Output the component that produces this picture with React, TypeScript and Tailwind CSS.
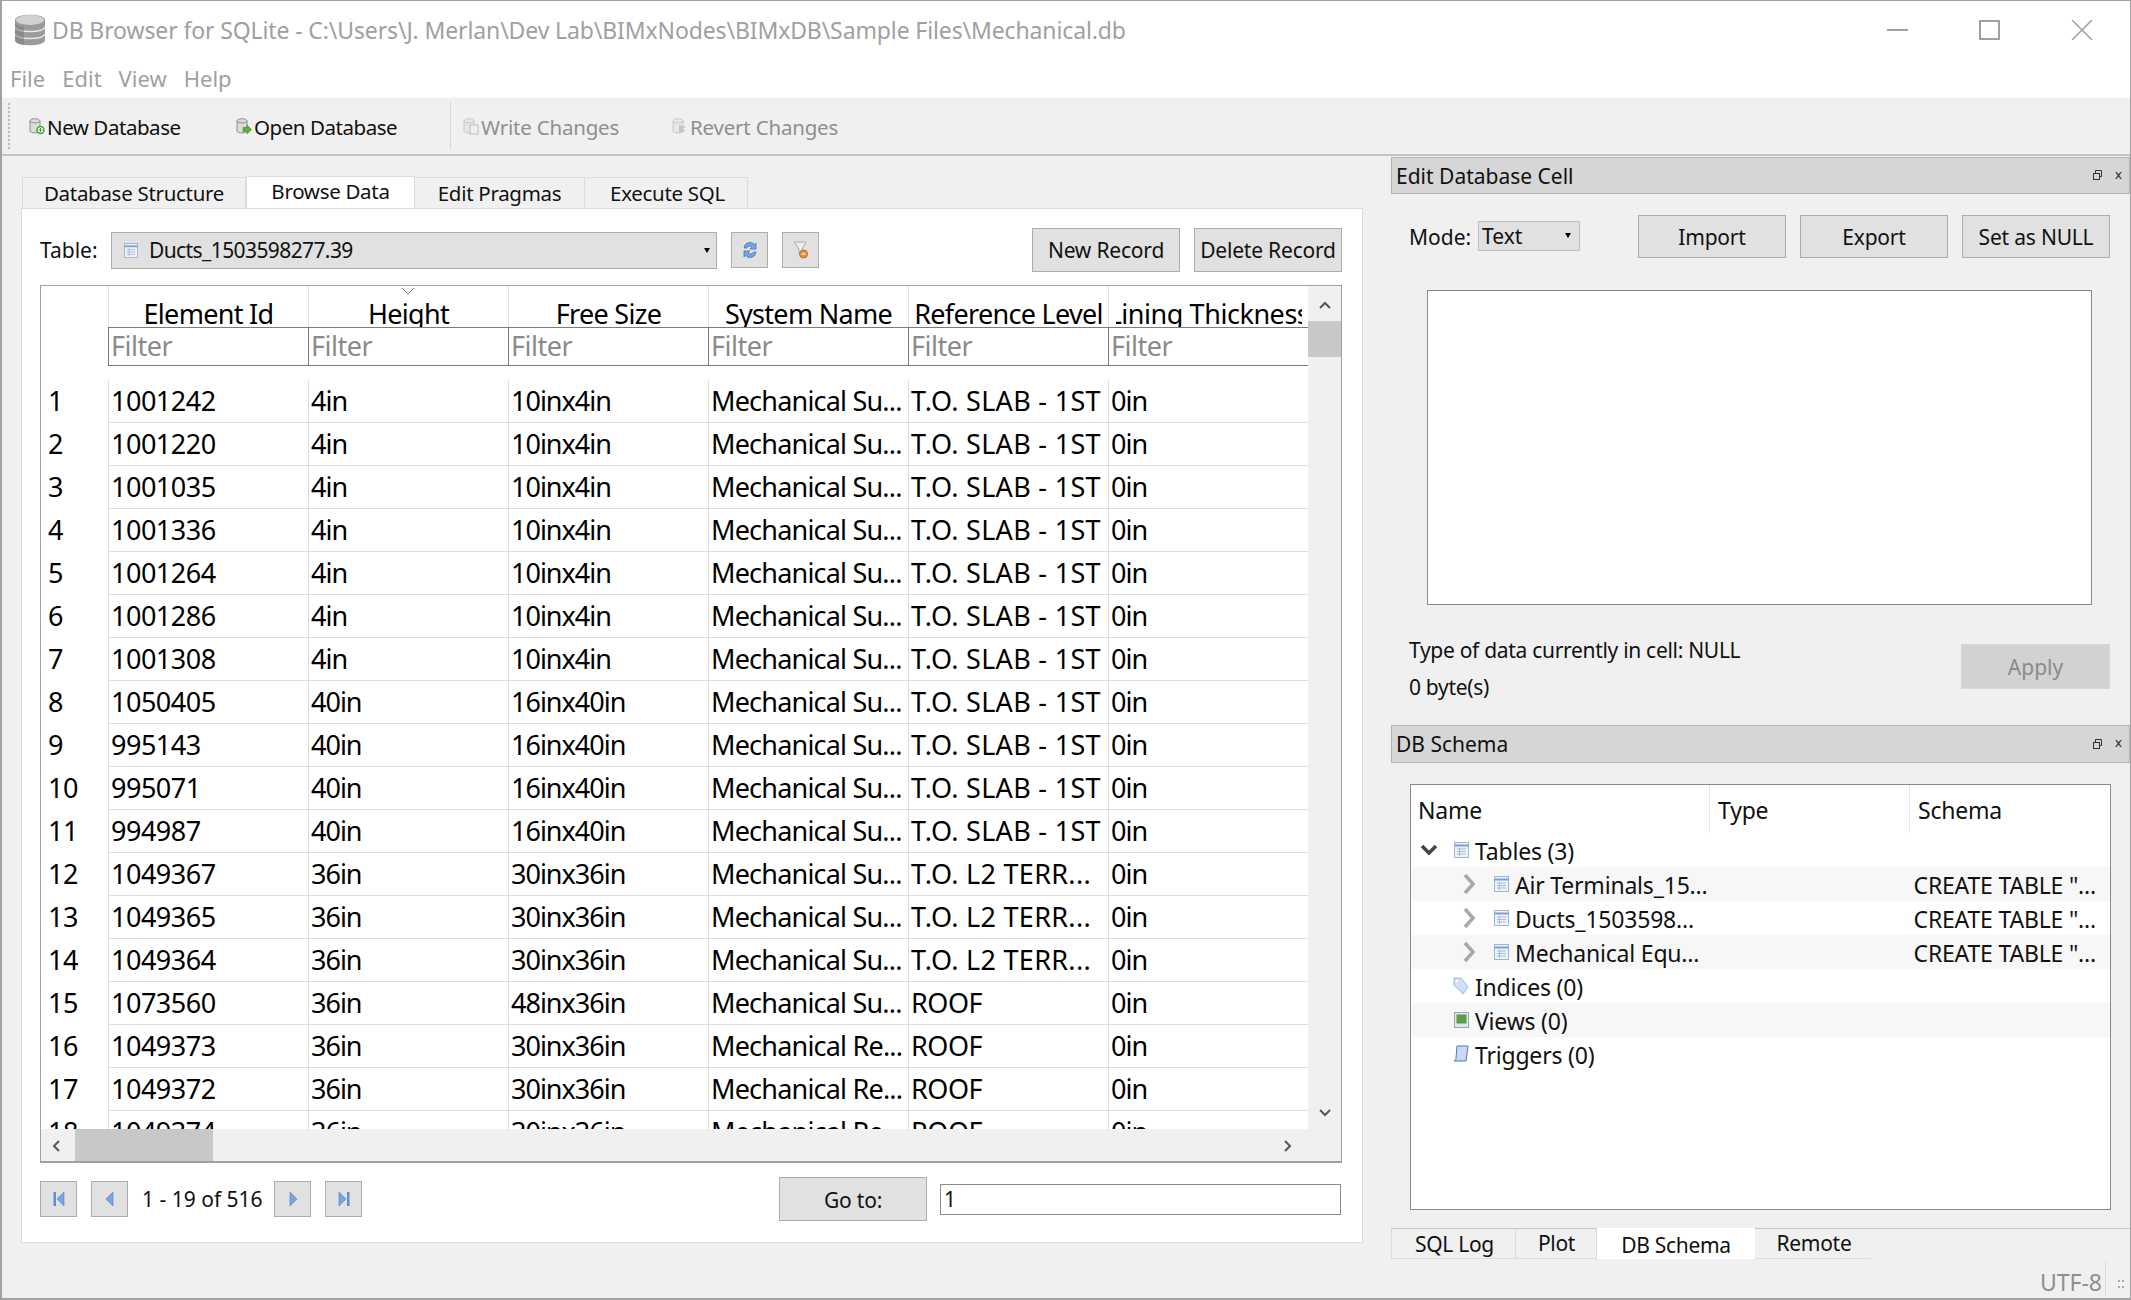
const rows = [
  ['1001242', '4in', '10inx4in', 'Mechanical Su...', 'T.O. SLAB - 1ST'],
  ['1001220', '4in', '10inx4in', 'Mechanical Su...', 'T.O. SLAB - 1ST'],
  ['1001035', '4in', '10inx4in', 'Mechanical Su...', 'T.O. SLAB - 1ST'],
  ['1001336', '4in', '10inx4in', 'Mechanical Su...', 'T.O. SLAB - 1ST'],
  ['1001264', '4in', '10inx4in', 'Mechanical Su...', 'T.O. SLAB - 1ST'],
  ['1001286', '4in', '10inx4in', 'Mechanical Su...', 'T.O. SLAB - 1ST'],
  ['1001308', '4in', '10inx4in', 'Mechanical Su...', 'T.O. SLAB - 1ST'],
  ['1050405', '40in', '16inx40in', 'Mechanical Su...', 'T.O. SLAB - 1ST'],
  ['995143', '40in', '16inx40in', 'Mechanical Su...', 'T.O. SLAB - 1ST'],
  ['995071', '40in', '16inx40in', 'Mechanical Su...', 'T.O. SLAB - 1ST'],
  ['994987', '40in', '16inx40in', 'Mechanical Su...', 'T.O. SLAB - 1ST'],
  ['1049367', '36in', '30inx36in', 'Mechanical Su...', 'T.O. L2 TERR...'],
  ['1049365', '36in', '30inx36in', 'Mechanical Su...', 'T.O. L2 TERR...'],
  ['1049364', '36in', '30inx36in', 'Mechanical Su...', 'T.O. L2 TERR...'],
  ['1073560', '36in', '48inx36in', 'Mechanical Su...', 'ROOF'],
  ['1049373', '36in', '30inx36in', 'Mechanical Re...', 'ROOF'],
  ['1049372', '36in', '30inx36in', 'Mechanical Re...', 'ROOF'],
  ['1049374', '36in', '30inx36in', 'Mechanical Re...', 'ROOF'],
]

const headers = ['Element Id', 'Height', 'Free Size', 'System Name', 'Reference Level', 'Lining Thickness']

// Noto runs wider than the screenshot's font on lowercase, narrower on capitals
const cellTracking = (c: string) => {
  if (c.startsWith('T.O.')) return 'tracking-[0.3px]'
  if (c.startsWith('Mechanical')) return 'tracking-[-0.8px]'
  if (c.includes('in')) return 'tracking-[-1px]'
  return 'tracking-[-0.5px]'
}

function DbIcon({ faded, badge }: { faded?: boolean; badge: 'plus' | 'arrow' | 'doc' | 'undo' }) {
  return (
    <svg width="16" height="17" viewBox="0 0 16 17" className={faded ? 'opacity-40' : ''}>
      <path d="M1 3c0-3 10-3 10 0v10c0 2.500-10 2.500-10 0z" fill="#dcdcdc" stroke="#8f8f8f" />
      <path d="M1 3c0 2.500 10 2.500 10 0" fill="none" stroke="#8f8f8f" />
      {badge === 'plus' && <circle cx="11.500" cy="12" r="3.500" fill="#fff" stroke="#4a9a3a" strokeWidth="1.500" />}
      {badge === 'plus' && <path d="M9.500 12h4M11.500 10v4" stroke="#4a9a3a" />}
      {badge === 'arrow' && <path d="M7 9.500h4V7l4.500 4.500L11 16v-2.500H7z" fill="#5fae3c" stroke="#3f8a2a" strokeWidth=".6" />}
      {badge === 'doc' && <rect x="7" y="7" width="8" height="9" fill="#eee" stroke="#777" />}
      {badge === 'undo' && <path d="M7 7l7 2-4 2 4 2-7 2z" fill="#888" />}
    </svg>
  )
}

function TableIcon({ size = 15 }: { size?: number }) {
  return (
    <svg width={size} height={size + 1} viewBox="0 0 15 16">
      <rect x=".5" y=".5" width="14" height="15" fill="#eef3fa" stroke="#9db6d8" />
      <path d="M.5 3.500h14" stroke="#7f9fcb" strokeWidth="2" />
      <path d="M3 7h9M3 9.500h9M3 12h9M5.500 5.500v8.500" stroke="#a6bbd6" />
    </svg>
  )
}

function NavIcon({ dir, edge }: { dir: 'left' | 'right'; edge?: boolean }) {
  return (
    <svg width="14" height="18" viewBox="0 0 14 18" className={dir === 'right' ? 'scale-x-[-1]' : ''}>
      {edge && <rect x="1.500" y="2" width="2.500" height="14" fill="#5b8fd6" />}
      <path d={edge ? 'M12 2v14L5 9z' : 'M10 2v14L3 9z'} fill="#7aa6e0" stroke="#4f80c4" strokeWidth=".6" />
    </svg>
  )
}

function Arrow() {
  return <div className="w-0 h-0 border-x-[3px] border-x-transparent border-t-[5px] border-t-black" />
}

function DockTitle({ title }: { title: string }) {
  return (
    <div className="h-[38px] bg-[#d6d6d6] border border-[#b4b4b4] flex items-center pl-[4px] text-[21px] text-[#111]">
      <span className="pt-[3px]">{title}</span>
      <svg width="9" height="10" viewBox="0 0 9 10" className="ml-auto mr-[13px]">
        <rect x=".5" y="3.500" width="6" height="6" fill="none" stroke="#333" />
        <path d="M2.500 3V.5h6v6H7" fill="none" stroke="#333" />
      </svg>
      <span className="mr-[7px] mb-[2px] text-[13px] leading-none text-[#222]">x</span>
    </div>
  )
}

function QtButton({ label, className }: { label: string; className: string }) {
  return (
    <div className={`${className} bg-[#e1e1e1] border border-[#adadad] flex items-center justify-center text-[21px] tracking-[-0.2px] text-[#111]`}>
      {label}
    </div>
  )
}

function ToolItem({ label, faded, badge, className }: { label: string; faded?: boolean; badge: 'plus' | 'arrow' | 'doc' | 'undo'; className: string }) {
  return (
    <div className={`${className} flex items-center gap-[2px] ${faded ? 'text-[#8f8f8f] tracking-[-0.2px]' : 'text-[#111]'}`}>
      <DbIcon faded={faded} badge={badge} />
      <span className="pt-[2px]">{label}</span>
    </div>
  )
}

function TreeRow({ shade, indent, chevron, icon, label, schema }: { shade?: boolean; indent: string; chevron?: 'down' | 'right'; icon: React.ReactNode; label: string; schema?: string }) {
  return (
    <div className={`h-[34px] flex items-center ${shade ? 'bg-[#f7f7f7]' : 'bg-white'}`}>
      <div className={`${indent} flex items-center shrink-0`}>
        <div className="w-[22px] flex justify-center">
          {chevron === 'down' && (
            <svg width="18" height="12" viewBox="0 0 18 12"><path d="M2 2l7 7 7-7" fill="none" stroke="#444" strokeWidth="3.500" /></svg>
          )}
          {chevron === 'right' && (
            <svg width="12" height="22" viewBox="0 0 12 22"><path d="M2 2l8 9-8 9" fill="none" stroke="#a8a8a8" strokeWidth="3.500" /></svg>
          )}
        </div>
      </div>
      <div className="w-[20px] ml-[11px] flex justify-center shrink-0">{icon}</div>
      <span className="ml-[4px] pt-[4px] whitespace-nowrap">{label}</span>
      {schema && <span className="ml-auto mr-[14px] pt-[4px] whitespace-nowrap">{schema}</span>}
    </div>
  )
}

export default function App() {
  return (
    <div className="w-[2131px] h-[1300px] bg-[#f0f0f0] border-l-2 border-t border-r border-b-2 border-[#a2a2a2] overflow-hidden flex flex-col font-['Noto_Sans',sans-serif]">
      {/* title bar */}
      <div className="h-[61px] bg-white flex items-center shrink-0">
        <svg width="32" height="32" viewBox="0 0 32 32" className="ml-[12px] mt-[-4px]">
          <path d="M1 6c0-7 30-7 30 0v20c0 7-30 7-30 0z" fill="#9b9b9b" />
          <ellipse cx="16" cy="6" rx="14" ry="5" fill="#d2d2d2" />
          <path d="M1 13c2 6 28 6 30 0M1 20c2 6 28 6 30 0" fill="none" stroke="#e8e8e8" strokeWidth="1.500" />
          <path d="M1 9v17c0 3 5 5 9 5V12C6 12 2 11 1 9z" fill="#7b7b7b" opacity=".5" />
        </svg>
        <span className="ml-[6px] mt-[-2px] text-[23px] tracking-[-0.12px] text-[#a0a0a0] whitespace-nowrap">DB Browser for SQLite - C:\Users\J. Merlan\Dev Lab\BIMxNodes\BIMxDB\Sample Files\Mechanical.db</span>
        <div className="ml-auto flex items-center mt-[-4px]">
          <div className="w-[21px] h-[2px] bg-[#a0a0a0]" />
          <div className="w-[21px] h-[20px] ml-[71px] border-2 border-[#a0a0a0]" />
          <svg width="22" height="20" viewBox="0 0 22 20" className="ml-[71px] mr-[37px]"><path d="M1 0l20 20M21 0L1 20" stroke="#a0a0a0" strokeWidth="1.500" /></svg>
        </div>
      </div>

      {/* menu */}
      <div className="h-[35px] bg-white flex items-center pl-[8px] pb-[2px] gap-[17px] text-[22px] text-[#a0a0a0] shrink-0">
        <span>File</span><span>Edit</span><span>View</span><span>Help</span>
      </div>

      {/* toolbar */}
      <div className="h-[59px] border-b-2 border-[#c4c4c4] border-t border-t-[#f8f8f8] flex items-center text-[20.500px] tracking-[-0.45px] shrink-0">
        <div className="w-0 h-[46px] ml-[6px] border-l-2 border-dotted border-[#b8b8b8]" />
        <ToolItem label="New Database" badge="plus" className="ml-[19px] w-[207px]" />
        <ToolItem label="Open Database" badge="arrow" className="w-[214px]" />
        <div className="w-px h-[48px] bg-[#d8d8d8]" />
        <ToolItem label="Write Changes" faded badge="doc" className="ml-[12px] w-[209px]" />
        <ToolItem label="Revert Changes" faded badge="undo" />
      </div>

      <div className="flex flex-1 min-h-0">
        {/* main pane */}
        <div className="w-[1389px] shrink-0 flex flex-col">
          <div className="flex mt-[19px] ml-[20px] h-[33px] items-end text-[20.500px] tracking-[-0.3px] text-[#111]">
            <div className="w-[224px] h-[31px] bg-[#f0f0f0] border border-b-0 border-[#dcdcdc] flex items-center justify-center">Database Structure</div>
            <div className="w-[169px] h-[32px] bg-white border-t border-x border-[#dcdcdc] flex items-center justify-center pb-[3px] relative">Browse Data</div>
            <div className="w-[170px] h-[31px] bg-[#f0f0f0] border-t border-r border-[#dcdcdc] flex items-center justify-center">Edit Pragmas</div>
            <div className="w-[163px] h-[31px] bg-[#f0f0f0] border-t border-r border-[#dcdcdc] flex items-center justify-center pl-[3px]">Execute SQL</div>
          </div>
          <div className="ml-[19px] w-[1342px] h-[1035px] bg-white border border-[#dcdcdc] flex flex-col pl-[18px] pr-[20px]">
            {/* table selector row */}
            <div className="flex items-center h-[44px] mt-[19px] text-[21px] text-[#111]">
              <span className="w-[71px] pt-[1px]">Table:</span>
              <div className="w-[606px] h-[37px] bg-[#e1e1e1] border border-[#adadad] flex items-center pl-[12px] pr-[6px]">
                <TableIcon size={14} />
                <span className="ml-[11px] pt-[2px] tracking-[-0.6px]">Ducts_1503598277.39</span>
                <div className="ml-auto"><Arrow /></div>
              </div>
              <div className="ml-[14px] w-[37px] h-[36px] bg-[#e1e1e1] border border-[#adadad] flex items-center justify-center">
                <svg width="16" height="20" viewBox="0 0 16 20"><path d="M2 8a6 6 0 0 1 10.500-3.500L14 3v6H8l2-2a3.500 3.500 0 0 0-5.500 1z" fill="#7ba6dd" stroke="#3f74bb" strokeWidth=".8" /><path d="M14 12a6 6 0 0 1-10.500 3.500L2 17v-6h6l-2 2a3.500 3.500 0 0 0 5.500-1z" fill="#7ba6dd" stroke="#3f74bb" strokeWidth=".8" /></svg>
              </div>
              <div className="ml-[14px] w-[37px] h-[36px] bg-[#e1e1e1] border border-[#adadad] flex items-center justify-center">
                <svg width="16" height="20" viewBox="0 0 16 20"><path d="M1 2h12L9 9v6L6 12V9z" fill="#eee" stroke="#aaa" /><circle cx="10.500" cy="14" r="4" fill="#e8913a" stroke="#b96a1e" /><path d="M8.500 14h4" stroke="#fff" /></svg>
              </div>
              <QtButton label="New Record" className="ml-auto w-[148px] h-[44px] pt-[2px]" />
              <QtButton label="Delete Record" className="ml-[14px] w-[148px] h-[44px] pt-[2px]" />
            </div>

            {/* data grid */}
            <div className="mt-[13px] h-[878px] border border-[#a0a0a0] border-b-2 flex flex-col shrink-0">
              <div className="flex flex-1 min-h-0">
                <div className="w-[1267px] overflow-hidden flex flex-col text-[27px] text-black">
                  <div className="h-[41px] flex shrink-0 ml-[67px]">
                    {headers.map((h, i) => (
                      <div key={h} className="w-[200px] relative flex justify-center border-l border-[#e4e4e4]">
                        {i === 1 && (
                          <svg width="14" height="8" viewBox="0 0 14 8" className="absolute top-[1px] left-[92px] z-10"><path d="M1 1l6 6 6-6" fill="none" stroke="#777" /></svg>
                        )}
                        <div className={`w-[186px] overflow-hidden flex justify-center items-end whitespace-nowrap leading-[34px] ${i === 5 ? 'tracking-[-0.45px]' : 'tracking-[-0.7px]'}`}>
                          <span className="shrink-0 -mb-[4px]">{h}</span>
                        </div>
                      </div>
                    ))}
                  </div>
                  <div className="h-[39px] flex shrink-0 ml-[67px] border-y border-[#7a7a7a] bg-white">
                    {headers.map(h => (
                      <div key={h} className="w-[200px] border-l border-[#7a7a7a] text-[#8a8a8a] pl-[2px] leading-[35px] tracking-[-0.5px]">Filter</div>
                    ))}
                  </div>
                  <div className="h-[14px] shrink-0" />
                  {rows.map((r, i) => (
                    <div key={r[0]} className="h-[43px] flex shrink-0 leading-[41px] tracking-[-0.5px]">
                      <div className="w-[67px] pl-[7px] shrink-0">{i + 1}</div>
                      {[...r, '0in'].map((c, j) => (
                        <div key={j} className={`w-[200px] shrink-0 border-l border-b border-[#dedede] pl-[2px] whitespace-nowrap overflow-hidden ${cellTracking(c)}`}>{c}</div>
                      ))}
                    </div>
                  ))}
                </div>
                <div className="flex-1 bg-[#f0f0f0] flex flex-col items-center">
                  <svg width="12" height="8" viewBox="0 0 12 8" className="mt-[15px]"><path d="M1 7l5-5 5 5" fill="none" stroke="#555" strokeWidth="2" /></svg>
                  <div className="w-full h-[36px] bg-[#c8c8c8] mt-[12px]" />
                  <svg width="12" height="8" viewBox="0 0 12 8" className="mt-auto mb-[12px]"><path d="M1 1l5 5 5-5" fill="none" stroke="#555" strokeWidth="2" /></svg>
                </div>
              </div>
              <div className="h-[32px] bg-[#f0f0f0] flex items-center shrink-0">
                <svg width="8" height="12" viewBox="0 0 8 12" className="ml-[11px] mt-[2px]"><path d="M7 1L2 6l5 5" fill="none" stroke="#555" strokeWidth="2" /></svg>
                <div className="w-[138px] h-full bg-[#c8c8c8] ml-[15px]" />
                <svg width="8" height="12" viewBox="0 0 8 12" className="ml-auto mr-[49px] mt-[2px]"><path d="M1 1l5 5-5 5" fill="none" stroke="#555" strokeWidth="2" /></svg>
              </div>
            </div>

            {/* pager */}
            <div className="flex items-center h-[44px] mt-[14px] text-[21px] text-[#111]">
              <div className="w-[37px] h-[36px] bg-[#e1e1e1] border border-[#adadad] flex items-center justify-center"><NavIcon dir="left" edge /></div>
              <div className="ml-[14px] w-[37px] h-[36px] bg-[#e1e1e1] border border-[#adadad] flex items-center justify-center"><NavIcon dir="left" /></div>
              <span className="ml-[14px] w-[132px] whitespace-nowrap pt-[2px]">1 - 19 of 516</span>
              <div className="w-[37px] h-[36px] bg-[#e1e1e1] border border-[#adadad] flex items-center justify-center"><NavIcon dir="right" /></div>
              <div className="ml-[14px] w-[37px] h-[36px] bg-[#e1e1e1] border border-[#adadad] flex items-center justify-center"><NavIcon dir="right" edge /></div>
              <QtButton label="Go to:" className="ml-[417px] w-[148px] h-[44px] pt-[3px]" />
              <div className="ml-[13px] w-[401px] h-[31px] bg-white border border-[#8a8a8a] pl-[3px] leading-[28px]">1</div>
            </div>
          </div>
        </div>

        {/* right docks */}
        <div className="flex-1 flex flex-col pt-[1px] text-[21px] text-[#111]">
          <DockTitle title="Edit Database Cell" />
          <div className="flex items-center h-[43px] mt-[21px] pl-[18px]">
            <span className="w-[69px] pt-[4px]">Mode:</span>
            <div className="w-[102px] h-[30px] bg-[#e1e1e1] border border-[#bdbdbd] flex items-center px-[3px] mb-[1px]">
              <span className="pt-[3px]">Text</span>
              <div className="ml-auto mr-[5px]"><Arrow /></div>
            </div>
            <QtButton label="Import" className="ml-[58px] w-[148px] h-[43px] pt-[4px]" />
            <QtButton label="Export" className="ml-[14px] w-[148px] h-[43px] pt-[4px]" />
            <QtButton label="Set as NULL" className="ml-[14px] w-[148px] h-[43px] pt-[4px]" />
          </div>
          <div className="mt-[32px] ml-[36px] w-[665px] h-[315px] bg-white border border-[#8a8a8a] shrink-0" />
          <div className="flex h-[74px] mt-[27px] pl-[18px] shrink-0">
            <div className="leading-[37px] tracking-[-0.3px]">
              <div>Type of data currently in cell: NULL</div>
              <div>0 byte(s)</div>
            </div>
            <div className="ml-auto mr-[20px] mt-[12px] w-[149px] h-[45px] bg-[#d2d2d2] border border-[#d8d8d8] flex items-center justify-center pt-[4px] text-[#8b8b8b]">Apply</div>
          </div>
          <div className="mt-[19px]"><DockTitle title="DB Schema" /></div>
          <div className="mt-[21px] ml-[19px] w-[701px] h-[426px] bg-white border border-[#8a8a8a] shrink-0 text-[23px] tracking-[-0.2px]">
            <div className="h-[48px] flex items-center">
              <div className="w-[299px] h-full border-r border-[#e6e6e6] pl-[7px] pt-[4px] flex items-center">Name</div>
              <div className="w-[200px] h-full border-r border-[#e6e6e6] pl-[8px] pt-[4px] flex items-center">Type</div>
              <div className="pl-[8px] pt-[4px]">Schema</div>
            </div>
            <TreeRow indent="ml-[7px]" chevron="down" icon={<TableIcon />} label="Tables (3)" />
            <TreeRow shade indent="ml-[47px]" chevron="right" icon={<TableIcon />} label="Air Terminals_15..." schema={'CREATE TABLE "...'} />
            <TreeRow indent="ml-[47px]" chevron="right" icon={<TableIcon />} label="Ducts_1503598..." schema={'CREATE TABLE "...'} />
            <TreeRow shade indent="ml-[47px]" chevron="right" icon={<TableIcon />} label="Mechanical Equ..." schema={'CREATE TABLE "...'} />
            <TreeRow indent="ml-[7px]" icon={
              <svg width="16" height="18" viewBox="0 0 16 18"><path d="M1 1h7l7 9-5 7-9-9z" fill="#cfe0f3" stroke="#9fb9d8" /><circle cx="4" cy="4" r="1.200" fill="#fff" /></svg>
            } label="Indices (0)" />
            <TreeRow shade indent="ml-[7px]" icon={
              <svg width="15" height="16" viewBox="0 0 15 16"><rect x=".5" y=".5" width="14" height="15" fill="#dfe5ec" stroke="#9aa6b2" /><rect x="2.500" y="2.500" width="10" height="9" fill="#5d9a4c" /></svg>
            } label="Views (0)" />
            <TreeRow indent="ml-[7px]" icon={
              <svg width="16" height="18" viewBox="0 0 16 18"><path d="M4 1h11l-2 15H1c2-1 2-2 2-3z" fill="#c9daf2" stroke="#4f79b8" /></svg>
            } label="Triggers (0)" />
          </div>
          {/* dock tabs */}
          <div className="mt-[18px] h-[31px] flex items-start border-t border-[#c4c4c4] shrink-0 tracking-[-0.3px]">
            <div className="w-[125px] h-[30px] border-x border-b border-[#dcdcdc] flex items-center justify-center pl-[2px] pt-[3px]">SQL Log</div>
            <div className="w-[81px] h-[30px] border-r border-b border-[#dcdcdc] flex items-center justify-center pl-[1px] pt-[1px]">Plot</div>
            <div className="w-[158px] h-[31px] -mt-px bg-white flex items-center justify-center pt-[5px]">DB Schema</div>
            <div className="w-[116px] h-[30px] border-b border-[#dcdcdc] flex items-center justify-center pl-[2px] pt-[2px]">Remote</div>
          </div>
          <div className="flex-1 flex items-center justify-end">
            <span className="text-[#8f8f8f] text-[23px] pt-[6px]">UTF-8</span>
            <div className="w-px h-[34px] bg-[#dcdcdc] ml-[3px] mr-[12px]" />
            <div className="w-[6px] h-[8px] mr-[6px] mt-[10px] border-y-2 border-dotted border-[#aaa]" />
          </div>
        </div>
      </div>
    </div>
  )
}
